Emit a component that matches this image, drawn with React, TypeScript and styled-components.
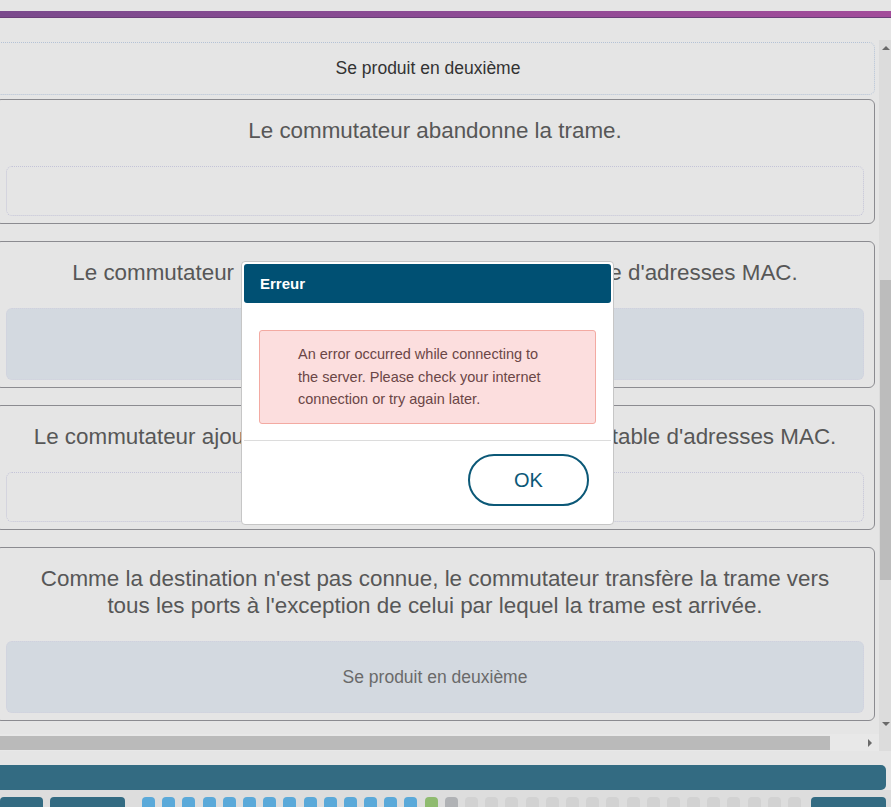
import React from "react";
import styled, { createGlobalStyle } from "styled-components";

const GlobalStyle = createGlobalStyle`
  html, body {
    margin: 0;
    padding: 0;
    background: #e5e5e5;
    font-family: "Liberation Sans", Arial, sans-serif;
  }
  * { box-sizing: border-box; }
`;

const Page = styled.div`
  position: relative;
  width: 891px;
  height: 807px;
  overflow: hidden;
  display: flex;
  flex-direction: column;
  background: #e5e5e5;
`;

const TopBar = styled.div`
  flex-shrink: 0;
  margin-top: 11px;
  height: 7px;
  background: linear-gradient(90deg, #7a4a8c 0%, #8c4b94 50%, #a24c9a 100%);
  border-bottom: 1px solid #6a3f78;
`;

const ScrollFrame = styled.div`
  flex-shrink: 0;
  margin-top: 22px;
  display: grid;
  grid-template-columns: 1fr 12px;
  grid-template-rows: 694px 17px;
`;

const Viewport = styled.div`
  overflow: hidden;
  padding-top: 2px;
`;

const Track = styled.div`
  margin: 0 4px 0 -5px;
  display: flex;
  flex-direction: column;
  gap: 17px;
`;

const ChoiceSlot = styled.div`
  margin: 0 0 -13px -14px;
  height: 53px;
  border: 1px dotted #b4c2d6;
  border-radius: 6px;
  display: flex;
  align-items: center;
  justify-content: center;
  font-size: 17.5px;
  color: #333;
`;

const Card = styled.div`
  border: 1px solid #8b8b90;
  border-radius: 6px;
  padding: 17px 10px 7px;
  display: flex;
  flex-direction: column;
`;

const CardTitle = styled.div`
  font-size: 22.4px;
  line-height: 27px;
  color: #575757;
  text-align: center;
  margin-bottom: 22px;
  padding: 0 16px;
`;

const DropBox = styled.div<{ $filled?: boolean }>`
  height: ${(p) => (p.$filled ? "72px" : "50px")};
  border: 1px dotted ${(p) => (p.$filled ? "#d0d0de" : "#c4c4d8")};
  border-radius: 6px;
  background: ${(p) => (p.$filled ? "#d3d9e0" : "transparent")};
  display: flex;
  align-items: center;
  justify-content: center;
  font-size: 17.5px;
  color: #6a6a6a;
`;

const VScroll = styled.div`
  background: #dcdcdc;
  display: flex;
  flex-direction: column;
  align-items: stretch;
  padding: 6px 0 8px 1px;
`;

const Arrow = styled.div<{ $dir: "up" | "down" | "right" }>`
  width: 0;
  height: 0;
  align-self: center;
  ${(p) =>
    p.$dir === "up"
      ? "border-left: 4px solid transparent; border-right: 4px solid transparent; border-bottom: 4px solid #6a6a6a;"
      : p.$dir === "down"
      ? "border-left: 4px solid transparent; border-right: 4px solid transparent; border-top: 4px solid #6a6a6a;"
      : "border-top: 4px solid transparent; border-bottom: 4px solid transparent; border-left: 4px solid #6a6a6a;"}
`;

const VThumb = styled.div`
  margin-top: 230px;
  height: 300px;
  background: #bcbcbc;
`;

const Spacer = styled.div`
  flex: 1;
`;

const HScroll = styled.div`
  background: #e8e8e8;
  display: flex;
  align-items: center;
  padding: 0 7px 0 0;
`;

const HThumb = styled.div`
  width: 830px;
  height: 14px;
  background: #bababa;
`;

const Corner = styled.div`
  background: #dcdcdc;
`;

const NavArea = styled.div`
  margin-top: 14px;
  flex: 1;
  display: flex;
  flex-direction: column;
`;

const ProgressBar = styled.div`
  flex-shrink: 0;
  height: 25px;
  margin: 0 5px 0 -5px;
  background: #336b82;
  border-radius: 5px;
`;

const NavRow = styled.div`
  flex: 1;
  background: #dddddd;
  padding: 7px 5px 0 0;
  display: flex;
  align-items: flex-start;
`;

const NavButton = styled.div<{ $w: number; $gap?: number }>`
  width: ${(p) => p.$w}px;
  margin-left: ${(p) => p.$gap ?? 0}px;
  height: 30px;
  background: #336b82;
  border-radius: 4px;
`;

const Dots = styled.div`
  margin: 0 auto 0 17px;
  display: flex;
  gap: 7.2px;
`;

const Dot = styled.div<{ $state: "done" | "current" | "seen" | "todo" }>`
  width: 13px;
  height: 14px;
  border-radius: 4px;
  background: ${(p) =>
    p.$state === "done"
      ? "#5aa9d9"
      : p.$state === "current"
      ? "#8fbb6f"
      : p.$state === "seen"
      ? "#b0b2b5"
      : "#d2d2d2"};
`;

const Modal = styled.div`
  position: absolute;
  left: 241px;
  top: 261px;
  width: 373px;
  background: #fff;
  border: 1px solid #c6c6c6;
  border-radius: 4px;
  padding: 2px;
`;

const ModalHeader = styled.div`
  height: 39px;
  background: #005073;
  border-radius: 3px;
  color: #fff;
  font-weight: bold;
  font-size: 15px;
  display: flex;
  align-items: center;
  padding-left: 16px;
`;

const AlertBox = styled.div`
  margin: 27px 15px 16px;
  height: 94px;
  background: #fcdede;
  border: 1px solid #f3aaa2;
  border-radius: 3px;
  padding: 12px 38px;
  font-size: 14.5px;
  line-height: 22.5px;
  color: #6b4646;
`;

const Divider = styled.div`
  height: 1px;
  background: #dcdcdc;
`;

const ModalFooter = styled.div`
  display: flex;
  justify-content: flex-end;
  padding: 13px 22px 16px;
`;

const OkButton = styled.button`
  width: 121px;
  height: 52px;
  border: 2px solid #0b5877;
  border-radius: 26px;
  background: #fff;
  color: #0b5877;
  font-family: "Liberation Sans", Arial, sans-serif;
  font-size: 20px;
`;

// filled slots behind the modal keep their label hidden
const cards = [
  { title: "Le commutateur abandonne la trame.", filled: false, slot: "" },
  {
    title: "Le commutateur remet à jour l'horodatage dans la table d'adresses MAC.",
    filled: true,
    slot: "",
  },
  {
    title: "Le commutateur ajoute l'adresse MAC source du port à la table d'adresses MAC.",
    filled: false,
    slot: "",
  },
  {
    title:
      "Comme la destination n'est pas connue, le commutateur transfère la trame vers tous les ports à l'exception de celui par lequel la trame est arrivée.",
    filled: true,
    slot: "Se produit en deuxième",
  },
];

const dots: Array<"done" | "current" | "seen" | "todo"> = [
  ...Array(14).fill("done"),
  "current",
  "seen",
  ...Array(17).fill("todo"),
];

export default function App() {
  return (
    <Page>
      <GlobalStyle />
      <TopBar />
      <ScrollFrame>
        <Viewport>
          <Track>
            <ChoiceSlot>Se produit en deuxième</ChoiceSlot>
            {cards.map((c) => (
              <Card key={c.title}>
                <CardTitle>{c.title}</CardTitle>
                <DropBox $filled={c.filled}>{c.slot}</DropBox>
              </Card>
            ))}
          </Track>
        </Viewport>
        <VScroll>
          <Arrow $dir="up" />
          <VThumb />
          <Spacer />
          <Arrow $dir="down" />
        </VScroll>
        <HScroll>
          <HThumb />
          <Spacer />
          <Arrow $dir="right" />
        </HScroll>
        <Corner />
      </ScrollFrame>
      <NavArea>
        <ProgressBar />
        <NavRow>
          <NavButton $w={43} />
          <NavButton $w={75} $gap={7} />
          <Dots>
            {dots.map((d, i) => (
              <Dot key={i} $state={d} />
            ))}
          </Dots>
          <NavButton $w={75} />
        </NavRow>
      </NavArea>
      <Modal>
        <ModalHeader>Erreur</ModalHeader>
        <AlertBox>
          An error occurred while connecting to the server. Please check your
          internet connection or try again later.
        </AlertBox>
        <Divider />
        <ModalFooter>
          <OkButton>OK</OkButton>
        </ModalFooter>
      </Modal>
    </Page>
  );
}
